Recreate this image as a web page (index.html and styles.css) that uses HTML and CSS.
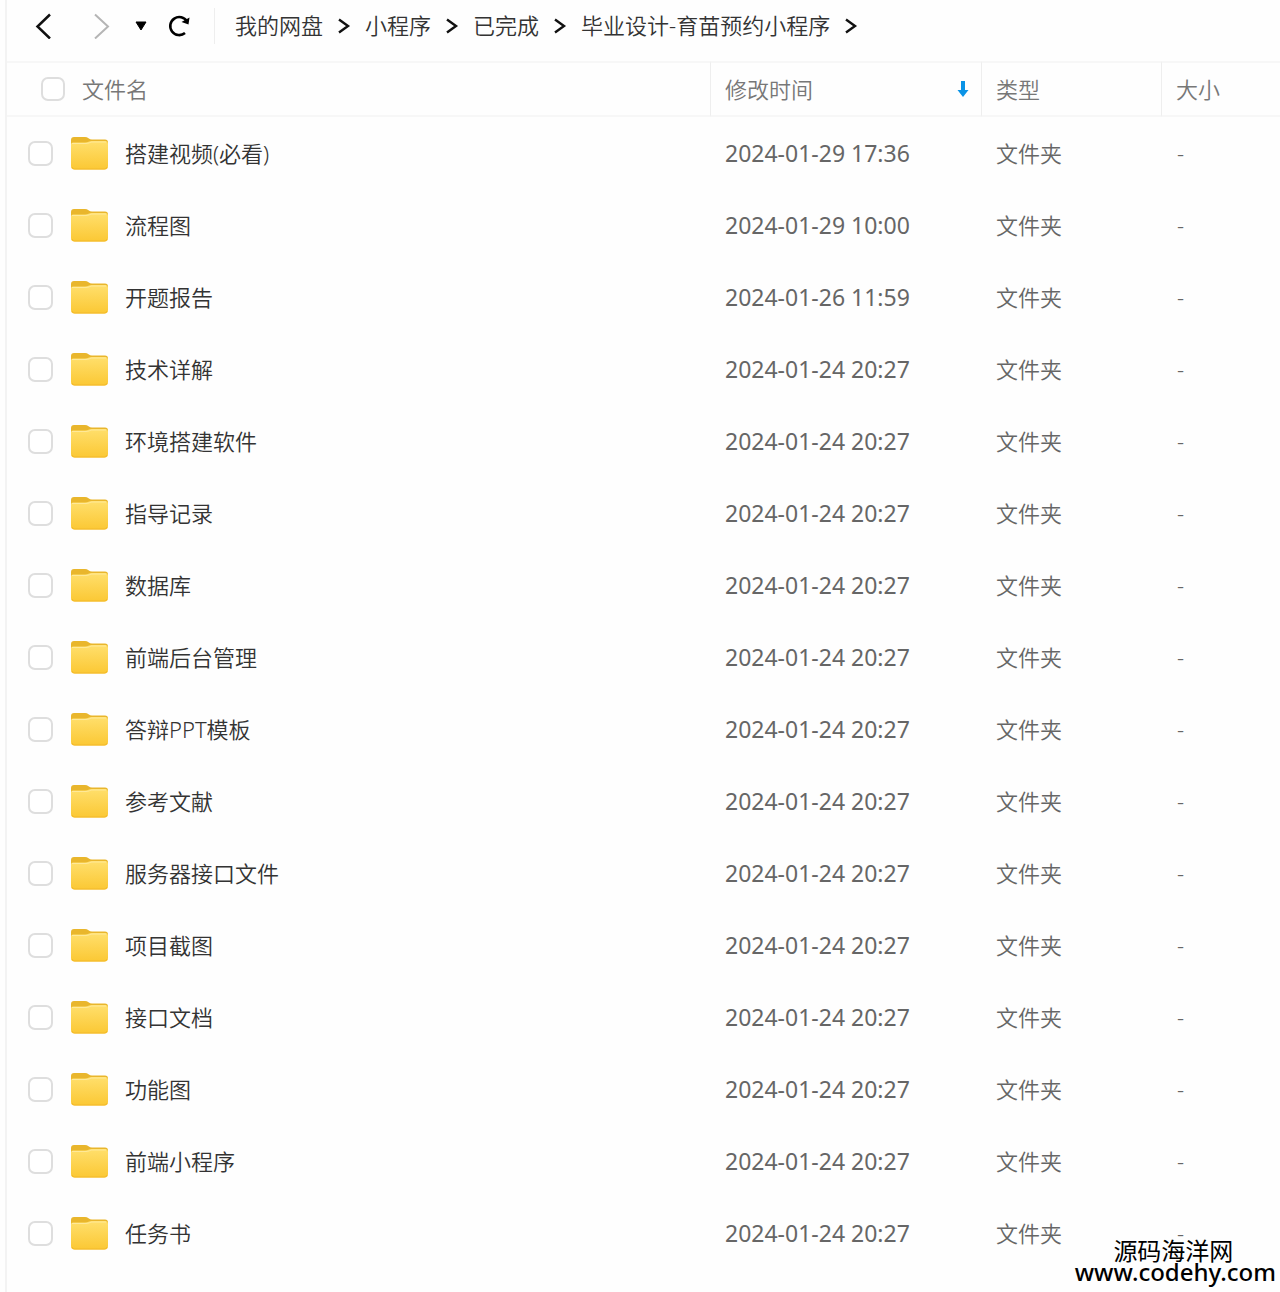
FILE: index.html
```html
<!DOCTYPE html>
<html lang="zh-CN">
<head>
  <meta charset="UTF-8" />
  <meta name="viewport" content="width=device-width, initial-scale=1" />
  <title>我的网盘</title>
  <link rel="stylesheet" href="styles.css">
</head>
<body>

<svg class="sprite" aria-hidden="true">
  <defs>
    <linearGradient id="folderFront" x1="0" y1="0" x2="0" y2="1">
      <stop offset="0" stop-color="#ffdf6c" />
      <stop offset="1" stop-color="#fbc834" />
    </linearGradient>
  </defs>
  <symbol id="folder" viewBox="0 0 38 34">
    <path d="M0 4Q0 1 3 1H14Q16 1 17.500 2.200T21 3.500H34Q37 3.500 37 6.500V14H0Z" fill="#e9b62c" />
    <path d="M0 8Q0 6.500 2 6.500H14Q16 6.500 17.500 5.700T21 5H34Q37 5 37 8V30Q37 33.500 33.500 33.500H3.500Q0 33.500 0 30Z" fill="url(#folderFront)" />
    <path d="M1 7.500H15Q17 7.500 18.500 6.700T22 6H35" fill="none" stroke="#ffe998" stroke-width="1" />
    <path d="M1 31Q1.500 33 3.500 33H33.500Q35.500 33 36 31" fill="none" stroke="#f3b92a" stroke-width="1" />
  </symbol>
  <symbol id="chevron" viewBox="0 0 14 16">
    <path d="M2 1.500L11 8L2 14.500" fill="none" stroke="#111" stroke-width="2.400" />
  </symbol>
</svg>

<main class="drive">
  <header class="toolbar">
    <button class="nav-btn" type="button" aria-label="后退">
      <svg width="18" height="26" viewBox="0 0 18 26"><path d="M15 1.500L2.500 13.500L15 25.500" fill="none" stroke="#111" stroke-width="2.500" /></svg>
    </button>
    <button class="nav-btn forward" type="button" aria-label="前进">
      <svg width="18" height="26" viewBox="0 0 18 26"><path d="M2 1.500L15 13.500L2 25.500" fill="none" stroke="#b5b5b5" stroke-width="2" /></svg>
    </button>
    <button class="nav-btn history" type="button" aria-label="历史记录">
      <svg width="12" height="10" viewBox="0 0 12 10"><path d="M1 1H11L6 9Z" fill="#000" stroke="#000" stroke-width="1" stroke-linejoin="round" /></svg>
    </button>
    <button class="nav-btn refresh" type="button" aria-label="刷新">
      <svg width="24" height="24" viewBox="0 0 24 24">
        <path d="M18 19A9 9 0 1 1 20 7.500" fill="none" stroke="#000" stroke-width="2.600" />
        <path d="M14.500 8L22.500 3.500L21.500 10.500Z" fill="#000" />
      </svg>
    </button>
    <nav class="breadcrumb" aria-label="路径">
      <a href="#">我的网盘</a>
      <svg class="sep"><use href="#chevron" /></svg>
      <a href="#">小程序</a>
      <svg class="sep"><use href="#chevron" /></svg>
      <a href="#">已完成</a>
      <svg class="sep"><use href="#chevron" /></svg>
      <a href="#">毕业设计-育苗预约小程序</a>
      <svg class="sep"><use href="#chevron" /></svg>
    </nav>
  </header>

  <table class="files">
    <colgroup>
      <col />
      <col class="col-time" />
      <col class="col-type" />
      <col class="col-size" />
    </colgroup>
    <thead>
      <tr>
        <th>
          <label class="select-all"><input type="checkbox" class="check" />文件名</label>
        </th>
        <th>
          <button class="sort-btn" type="button">
            修改时间
            <svg width="12" height="18" viewBox="0 0 12 18"><path d="M4 1H8V10H11.500L6 17L0.500 10H4Z" fill="#0a93e6" /></svg>
          </button>
        </th>
        <th>类型</th>
        <th>大小</th>
      </tr>
    </thead>
    <tbody id="fileRows"></tbody>
  </table>

  <div class="watermark">
    <span class="site-name">源码海洋网</span>
    <span class="site-url">www.codehy.com</span>
  </div>
</main>

<script>
  const files = [
    ['搭建视频(必看)', '2024-01-29 17:36'],
    ['流程图', '2024-01-29 10:00'],
    ['开题报告', '2024-01-26 11:59'],
    ['技术详解', '2024-01-24 20:27'],
    ['环境搭建软件', '2024-01-24 20:27'],
    ['指导记录', '2024-01-24 20:27'],
    ['数据库', '2024-01-24 20:27'],
    ['前端后台管理', '2024-01-24 20:27'],
    ['答辩PPT模板', '2024-01-24 20:27'],
    ['参考文献', '2024-01-24 20:27'],
    ['服务器接口文件', '2024-01-24 20:27'],
    ['项目截图', '2024-01-24 20:27'],
    ['接口文档', '2024-01-24 20:27'],
    ['功能图', '2024-01-24 20:27'],
    ['前端小程序', '2024-01-24 20:27'],
    ['任务书', '2024-01-24 20:27']
  ];

  document.getElementById('fileRows').innerHTML = files.map(([name, time]) => `
    <tr>
      <td>
        <label class="file">
          <input type="checkbox" class="check" />
          <svg class="folder"><use href="#folder" /></svg>
          <span>${name}</span>
        </label>
      </td>
      <td class="time">${time}</td>
      <td>文件夹</td>
      <td>-</td>
    </tr>`).join('');
</script>

</body>
</html>
```
FILE: styles.css
```css
* {
  margin: 0;
  padding: 0;
  box-sizing: border-box;
}
body {
  font-family: "Noto Sans", "Noto Sans CJK SC", sans-serif;
  font-size: 22px;
  font-weight: 350;
  line-height: 32px;
  background: #fefefe;
  color: #333;
}
button {
  font: inherit;
  color: inherit;
  background: none;
  border: none;
  cursor: pointer;
}
a {
  color: inherit;
  text-decoration: none;
}
svg {
  display: block;
  flex: none;
}
.sprite {
  position: absolute;
  width: 0;
  height: 0;
}

.drive {
  position: relative;
  min-height: 100vh;
  margin-left: 5px;
  border-left: 2px solid #f3f3f3;
}

/* toolbar */
.toolbar {
  display: flex;
  align-items: center;
  height: 61px;
  padding: 0 0 9px 28px;
}
.forward {
  margin-left: 40px;
}
.history {
  margin-left: 24px;
}
.refresh {
  margin-left: 20px;
}
.breadcrumb {
  display: flex;
  align-items: center;
  gap: 14px;
  height: 36px;
  margin-left: 23px;
  padding-left: 20px;
  border-left: 1px solid #eee;
  white-space: nowrap;
}
.breadcrumb a {
  line-height: 36px;
  padding-bottom: 2px;
}
.sep {
  width: 14px;
  height: 16px;
}

/* file list */
.files {
  width: 100%;
  border-collapse: separate;
  border-spacing: 0;
  table-layout: fixed;
}
.col-time {
  width: 271px;
}
.col-type {
  width: 180px;
}
.col-size {
  width: 119px;
}
th {
  height: 56px;
  padding-left: 14px;
  border-top: 2px solid #f7f7f7;
  border-bottom: 2px solid #f7f7f7;
  color: #777;
  font-weight: 350;
  text-align: left;
}
th + th {
  border-left: 1px solid #eee;
}
th:first-child {
  padding-left: 34px;
}
.select-all {
  display: flex;
  align-items: center;
  gap: 17px;
}
.sort-btn {
  display: flex;
  align-items: center;
  justify-content: space-between;
  width: 100%;
  padding-right: 12px;
}
td {
  height: 72px;
  padding-left: 15px;
  color: #666;
}
td:first-child {
  padding-left: 21px;
  color: #333;
}
.time {
  font-size: 23px;
  font-weight: 400;
}
td:last-child {
  padding-left: 16px;
}
.file {
  display: flex;
  align-items: center;
}
.folder {
  width: 38px;
  height: 34px;
  margin: 0 16px 0 18px;
}
.check {
  appearance: none;
  flex: none;
  width: 25px;
  height: 25px;
  border: 2px solid #dedede;
  border-radius: 7px;
  background: #fff;
}
.select-all .check {
  width: 24px;
  height: 24px;
}
.check:checked {
  background: #0a93e6;
}

/* sits over the corner of the list */
.watermark {
  position: absolute;
  right: 4px;
  bottom: 10px;
  display: flex;
  flex-direction: column;
  align-items: center;
  color: #000;
  font-size: 24px;
  font-weight: 500;
  line-height: 21px;
}
.site-name {
  margin-right: 4px;
  font-weight: 400;
}
```
